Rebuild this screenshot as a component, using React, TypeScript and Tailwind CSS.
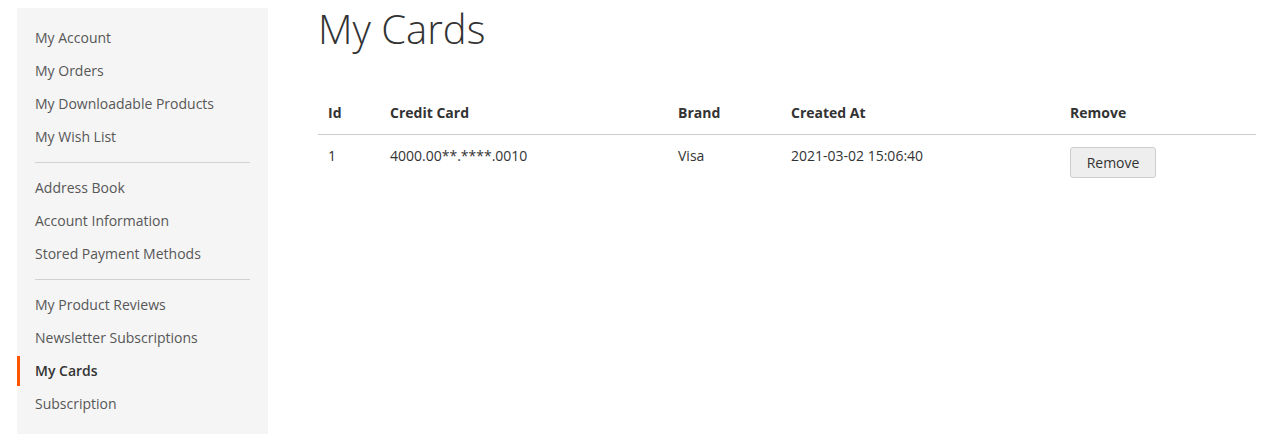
import React from 'react';

type NavItem = { label: string; current?: boolean } | { divider: true };

const nav: NavItem[] = [
  { label: 'My Account' },
  { label: 'My Orders' },
  { label: 'My Downloadable Products' },
  { label: 'My Wish List' },
  { divider: true },
  { label: 'Address Book' },
  { label: 'Account Information' },
  { label: 'Stored Payment Methods' },
  { divider: true },
  { label: 'My Product Reviews' },
  { label: 'Newsletter Subscriptions' },
  { label: 'My Cards', current: true },
  { label: 'Subscription' },
];

const cards = [
  { id: '1', number: '4000.00**.****.0010', brand: 'Visa', created: '2021-03-02 15:06:40' },
];

const Sidebar = () => (
  <div className="mt-[8px] ml-[17px] w-[251px] self-start bg-[#f5f5f5] py-[15px]">
    <ul className="flex flex-col gap-[3px]">
      {nav.map((item, i) =>
        'divider' in item ? (
          <li key={i} className="pt-[7px] pb-[7px]">
            <span className="mx-[18px] block border-t border-[#d1d1d1]" />
          </li>
        ) : (
          <li key={i}>
            <a
              className={
                item.current
                  ? 'block border-l-[3px] border-[#ff5501] pl-[15px] pr-[18px] py-[5px] leading-[20px] font-semibold text-[#333]'
                  : 'block border-l-[3px] border-transparent pl-[15px] pr-[18px] py-[5px] leading-[20px] text-[#575757]'
              }
            >
              {item.label}
            </a>
          </li>
        )
      )}
    </ul>
  </div>
);

export default function App() {
  return (
    <div
      className="flex h-[442px] w-full bg-white text-[14px] text-[#333]"
      style={{ fontFamily: '"Open Sans", "Liberation Sans", sans-serif' }}
    >
      <Sidebar />
      <main className="ml-[50px] w-[938px]">
        <h1 className="mt-[7px] text-[40px] leading-[44px] font-light text-[#333]">My Cards</h1>
        <table className="mt-[41px] w-full table-fixed border-collapse text-left">
          <thead>
            <tr className="border-b border-[#ccc]">
              <th className="w-[62px] px-[10px] py-[11px] leading-[20px] font-bold">Id</th>
              <th className="w-[288px] px-[10px] py-[11px] leading-[20px] font-bold">Credit Card</th>
              <th className="w-[113px] px-[10px] py-[11px] leading-[20px] font-bold">Brand</th>
              <th className="w-[279px] px-[10px] py-[11px] leading-[20px] font-bold">Created At</th>
              <th className="px-[10px] py-[11px] leading-[20px] font-bold">Remove</th>
            </tr>
          </thead>
          <tbody>
            {cards.map((c) => (
              <tr key={c.id}>
                <td className="px-[10px] pt-[11px] align-top leading-[20px]">{c.id}</td>
                <td className="px-[10px] pt-[11px] align-top leading-[20px]">{c.number}</td>
                <td className="px-[10px] pt-[11px] align-top leading-[20px]">{c.brand}</td>
                <td className="px-[10px] pt-[11px] align-top leading-[20px]">{c.created}</td>
                <td className="px-[10px] pt-[12px] align-top">
                  <button className="h-[31px] w-[86px] rounded-[3px] border border-[#cdcdcd] bg-[#eee] leading-[16px] font-normal text-[#333]">
                    Remove
                  </button>
                </td>
              </tr>
            ))}
          </tbody>
        </table>
      </main>
    </div>
  );
}
